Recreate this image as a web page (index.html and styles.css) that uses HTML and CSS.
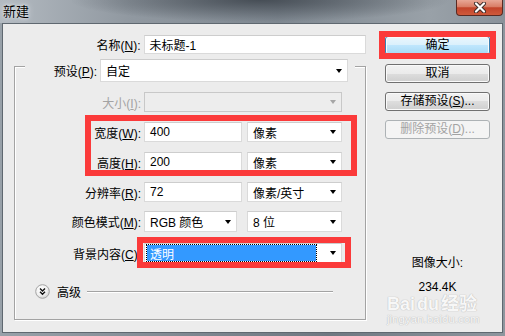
FILE: index.html
```html
<!DOCTYPE html>
<html lang="zh-CN">
<head>
    <meta charset="UTF-8">
    <title>新建</title>
    <link rel="stylesheet" href="styles.css">
</head>
<body>
<div class="window">
    <div class="titlebar">
        <span class="title">新建</span>
        <span class="close">
            <svg width="14" height="11" viewBox="0 0 14 11">
                <path d="M3 1.5 L11 9.5 M11 1.5 L3 9.5" stroke="#3a2a28" stroke-width="4" stroke-linecap="round"/>
                <path d="M3 1.5 L11 9.5 M11 1.5 L3 9.5" stroke="#fff" stroke-width="2.2" stroke-linecap="round"/>
            </svg>
        </span>
    </div>
    <div class="client">
        <div class="form">
            <div class="row name-row">
                <label class="lbl">名称(<u>N</u>):</label>
                <div class="field f-name">未标题-1</div>
            </div>
            <div class="group">
                <div class="preset-row">
                    <label class="lbl">预设(<u>P</u>):</label>
                    <div class="field f-preset"><span class="val">自定</span><span class="arrow"></span></div>
                </div>
                <div class="row size-row disabled">
                    <label class="lbl">大小(<u>I</u>):</label>
                    <div class="field f-size"><span class="val"></span><span class="arrow"></span></div>
                </div>
                <div class="row r-width">
                    <label class="lbl">宽度(<u>W</u>):</label>
                    <div class="field f-num">400</div>
                    <div class="field f-unit"><span class="val">像素</span><span class="arrow"></span></div>
                </div>
                <div class="row r-height">
                    <label class="lbl">高度(<u>H</u>):</label>
                    <div class="field f-num">200</div>
                    <div class="field f-unit"><span class="val">像素</span><span class="arrow"></span></div>
                </div>
                <div class="row r-res">
                    <label class="lbl">分辨率(<u>R</u>):</label>
                    <div class="field f-num">72</div>
                    <div class="field f-unit"><span class="val">像素/英寸</span><span class="arrow"></span></div>
                </div>
                <div class="row r-mode">
                    <label class="lbl">颜色模式(<u>M</u>):</label>
                    <div class="field f-mode"><span class="val">RGB 颜色</span><span class="arrow"></span></div>
                    <div class="field f-bits"><span class="val">8 位</span><span class="arrow"></span></div>
                </div>
                <div class="row r-bg">
                    <label class="lbl">背景内容(<u>C</u>):</label>
                    <div class="field f-bg"><span class="sel">透明</span><span class="arrow"></span></div>
                </div>
                <div class="adv-row">
                    <svg class="expand" width="15" height="15" viewBox="0 0 15 15">
                        <defs>
                            <radialGradient id="g" cx="0.4" cy="0.35" r="0.7">
                                <stop offset="0" stop-color="#ffffff"/>
                                <stop offset="0.6" stop-color="#f1f1f1"/>
                                <stop offset="1" stop-color="#cfcfcf"/>
                            </radialGradient>
                        </defs>
                        <circle cx="7.5" cy="7.5" r="6.8" fill="url(#g)" stroke="#a3a3a3"/>
                        <path d="M5 4.5 L7.5 7 L10 4.5 M5 7.7 L7.5 10.2 L10 7.7" fill="none" stroke="#111" stroke-width="1.4"/>
                    </svg>
                    <span class="adv-text">高级</span>
                    <span class="adv-line"></span>
                </div>
            </div>
        </div>
        <div class="side">
            <div class="btn btn-default">确定</div>
            <div class="btn">取消</div>
            <div class="btn">存储预设(<u>S</u>)...</div>
            <div class="btn btn-disabled">删除预设(<u>D</u>)...</div>
            <div class="info-label">图像大小:</div>
            <div class="info-value">234.4K</div>
            <div class="watermark">
                <div class="wm-logo">Bai<span class="wm-du">du</span>经验</div>
                <div class="wm-url">jingyan.baidu.com</div>
            </div>
        </div>
    </div>
    <div class="mark mark-ok"></div>
    <div class="mark mark-size"></div>
    <div class="mark mark-bg"></div>
</div>
</body>
</html>
```

FILE: styles.css
```css
* {
    box-sizing: border-box;
}
body {
    margin: 0;
    font-family: "Liberation Sans", "Noto Sans CJK SC", sans-serif;
    font-size: 12px;
    color: #000;
}
.window {
    position: relative;
    width: 505px;
    height: 336px;
    overflow: hidden;
    background: linear-gradient(90deg, #98a1a9 0%, #7d868f 40%, #6f7881 65%, #8e969e 100%);
}
.titlebar {
    height: 23px;
    display: flex;
    justify-content: space-between;
    align-items: flex-start;
    background:
        radial-gradient(ellipse 190px 22px at 260px 0, rgba(60, 67, 75, 0.85), rgba(60, 67, 75, 0)),
        linear-gradient(90deg, #b3bac1 0%, #9199a1 25%, #7f8891 55%, #99a1a8 85%, #8a929a 100%);
}
.title {
    padding: 4px 0 0 3px;
    font-size: 13px;
    line-height: 15px;
    text-shadow: 0 0 6px #e8ecef, 0 0 3px #e8ecef;
}
.close {
    width: 47px;
    height: 16px;
    margin-right: 2px;
    display: flex;
    align-items: center;
    justify-content: center;
    border: 1px solid #5a2a22;
    border-top: none;
    border-radius: 0 0 4px 4px;
    background: linear-gradient(#e8a796 0%, #d97d66 45%, #c2432a 52%, #cf5a3b 100%);
}
.client {
    margin: 0 2px;
    height: 310px;
    display: flex;
    border: 1px solid #5f6870;
    background: #ececec;
}
.form {
    width: 363px;
    padding-top: 11px;
}
.row {
    display: flex;
    align-items: center;
    height: 20px;
}
.lbl {
    width: 126px;
    margin-right: 3px;
    text-align: right;
    white-space: nowrap;
}
.name-row {
    height: 19px;
}
.name-row .lbl {
    width: 138px;
}
.field {
    height: 100%;
    display: flex;
    align-items: center;
    padding-left: 5px;
    background: #fff;
    border: 1px solid #dadada;
    border-top-color: #cdcdcd;
    white-space: nowrap;
}
.field .val {
    flex: 1;
}
.arrow {
    width: 0;
    height: 0;
    margin-right: 5px;
    border-left: 3.5px solid transparent;
    border-right: 3.5px solid transparent;
    border-top: 4px solid #000;
}
.f-name {
    width: 223px;
}
.group {
    width: 352px;
    height: 254px;
    margin: 12px 0 0 11px;
    border: 1px solid #a3a3a3;
    box-shadow: 1px 1px 0 #fff, inset 1px 1px 0 #fff;
}
.preset-row {
    display: flex;
    align-items: center;
    height: 23px;
    margin: -8px 10px 0;
    background: #ececec;
}
.preset-row .lbl {
    width: 72px;
}
.f-preset {
    width: 248px;
}
.size-row {
    margin-top: 10px;
}
.disabled .lbl {
    color: #a3a3a3;
}
.disabled .field {
    background: #ededed;
    border-color: #c8c8c8;
}
.disabled .arrow {
    border-top-color: #a6a6a6;
}
.f-size, .f-bg {
    width: 198px;
}
.r-width, .r-height, .r-res {
    margin-top: 10px;
}
.f-num {
    width: 98px;
}
.f-unit {
    width: 95px;
    margin-left: 5px;
}
.r-mode {
    height: 21px;
    margin-top: 9px;
}
.f-mode {
    width: 93px;
}
.f-bits {
    width: 95px;
    margin-left: 10px;
}
.r-bg {
    margin-top: 11px;
}
.f-bg {
    padding: 1px 0 1px 2px;
}
.f-bg .sel {
    flex: 1;
    align-self: stretch;
    display: flex;
    align-items: center;
    margin-right: 14px;
    padding-left: 3px;
    background: #3399ff;
    color: #fff;
    outline: 1px dotted #000;
}
.adv-row {
    display: flex;
    align-items: center;
    height: 15px;
    margin: 21px 0 0 20px;
}
.adv-text {
    margin-left: 7px;
}
.adv-line {
    flex: 1;
    height: 2px;
    margin: 0 32px 0 6px;
    border-top: 1px solid #a3a3a3;
    border-bottom: 1px solid #fff;
}
.side {
    width: 105px;
    margin-left: 19px;
    padding-top: 12px;
    display: flex;
    flex-direction: column;
}
.btn {
    height: 19px;
    margin-bottom: 9px;
    line-height: 17px;
    text-align: center;
    border: 1px solid #707070;
    border-radius: 3px;
    background: linear-gradient(#f2f2f2 0%, #ebebeb 50%, #dddddd 50%, #cfcfcf 100%);
    box-shadow: inset 0 0 0 1px #fafafa;
}
.btn-default {
    border-color: #3c7fb1;
    background: linear-gradient(#eaf6fd 0%, #d9f0fc 50%, #bee6fd 50%, #a7d9f5 100%);
}
.btn-disabled {
    color: #a3a3a3;
    border-color: #adb2b5;
    background: #f4f4f4;
    box-shadow: none;
}
.info-label {
    margin-top: 107px;
    line-height: 16px;
    text-align: center;
}
.info-value {
    margin-top: 8px;
    line-height: 16px;
    text-align: center;
}
.watermark {
    margin: 0 0 0 2px;
    color: #f7f7f7;
    text-shadow: 0 0 1px #bdbdbd, 0 0 1px #bdbdbd;
}
.wm-logo {
    font-size: 18px;
    font-weight: bold;
    line-height: 18px;
}
.wm-du {
    margin: 0 2px;
}
.wm-url {
    font-size: 11.5px;
    line-height: 13px;
}
.mark {
    position: absolute;
    border: 6px solid #fb3a3a;
}
.mark-ok {
    left: 379px;
    top: 31px;
    width: 117px;
    height: 28px;
}
.mark-size {
    left: 85px;
    top: 115px;
    width: 272px;
    height: 61px;
}
.mark-bg {
    left: 137px;
    top: 237px;
    width: 214px;
    height: 31px;
}
```
